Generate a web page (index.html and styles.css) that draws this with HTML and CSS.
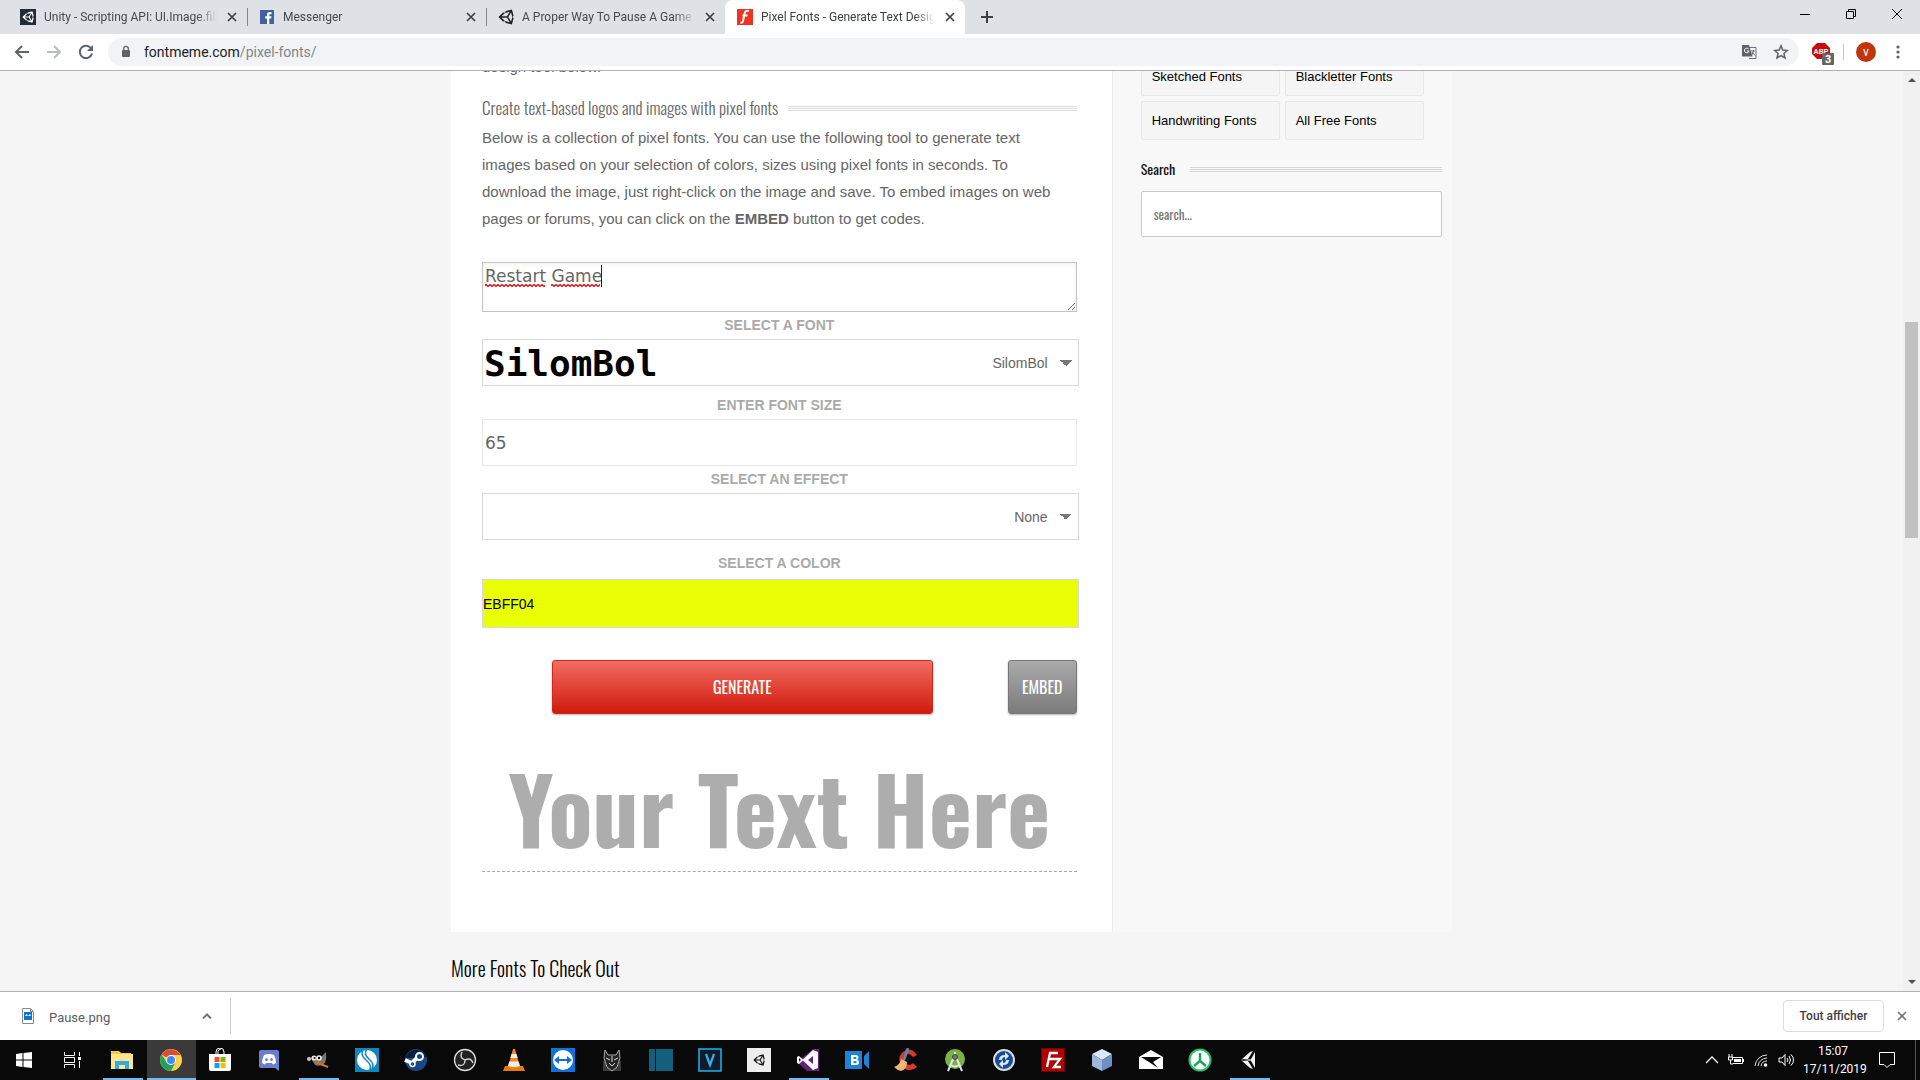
FILE: index.html
```html
<!DOCTYPE html>
<html lang="en">
<head>
<meta charset="utf-8">
<title>Pixel Fonts - Generate Text Designs</title>
<link rel="stylesheet" href="styles.css">
</head>
<body>
<svg class="defs" aria-hidden="true">
  <symbol id="x" viewBox="0 0 10 10"><path d="M1 1l8 8M9 1l-8 8" fill="none" stroke="currentColor" stroke-width="1.7"/></symbol>
  <symbol id="unity" viewBox="0 0 512 512"><path fill="currentColor" fill-rule="evenodd" d="M498.11 206.4L445.31 14.720 248.200 66.080 219 116.140l-59.200-.430L15.540 256l144.280 140.290 59.170-.420 29.240 50 197.080 51.360 52.800-191.620-30-49.630zM223.770 124.200L374.550 86.510 288 232.330H114.870zM223.770 387.830L114.870 279.710H288l86.550 145.810zM416.770 401.830L330.170 256l86.580-145.840L458.560 256z"/></symbol>
</svg>

<header class="chrome">
  <nav class="tabs" aria-label="Tabs">
    <div class="tab">
      <svg class="fav" viewBox="0 0 16 16"><rect width="16" height="16" fill="#222c37"/><use href="#unity" x="2" y="2" width="12" height="12" color="#fff"/></svg>
      <span class="tab-title">Unity - Scripting API: UI.Image.fill</span>
      <button class="close" aria-label="Close tab"><svg><use href="#x"/></svg></button>
    </div>
    <div class="tab divided">
      <svg class="fav" viewBox="0 0 16 16"><rect x="1" y="1" width="14" height="14" fill="#4460a0"/><path d="M8 15V9.500H6.200V7.300H8V5.600C8 3.800 9.200 3 10.800 3h1.700v2.200h-1.200c-.8 0-1 .4-1 1v1.100h2.200l-.3 2.200h-1.900V15z" fill="#fff"/></svg>
      <span class="tab-title">Messenger</span>
      <button class="close" aria-label="Close tab"><svg><use href="#x"/></svg></button>
    </div>
    <div class="tab divided">
      <svg class="fav"><use href="#unity" color="#222"/></svg>
      <span class="tab-title">A Proper Way To Pause A Game -</span>
      <button class="close" aria-label="Close tab"><svg><use href="#x"/></svg></button>
    </div>
    <div class="tab active">
      <svg class="fav" viewBox="0 0 16 16"><rect width="16" height="16" fill="#ee3322"/><path d="M12 2c-3-1-4 .5-4.500 3L6 12c-.3 1.500-1 2-2.500 1.500M5.500 6.500h5" fill="none" stroke="#fff" stroke-width="2"/></svg>
      <span class="tab-title">Pixel Fonts - Generate Text Desig</span>
      <button class="close" aria-label="Close tab"><svg><use href="#x"/></svg></button>
    </div>
    <button class="new-tab" aria-label="New tab"><svg viewBox="0 0 14 14"><path d="M7 1v12M1 7h12" stroke="#3c4043" stroke-width="2"/></svg></button>
    <div class="window-buttons">
      <button aria-label="Minimise"><svg viewBox="0 0 10 10"><path d="M0 5.500h10" stroke="#000"/></svg></button>
      <button aria-label="Restore"><svg viewBox="0 0 10 10"><path d="M.5 2.500h7v7h-7zM2.500 2.500v-2h7v7h-2" fill="none" stroke="#000"/></svg></button>
      <button aria-label="Close"><svg viewBox="0 0 10 10"><path d="M0 0l10 10M10 0L0 10" stroke="#000"/></svg></button>
    </div>
  </nav>
  <div class="toolbar">
    <button class="tool" aria-label="Back"><svg viewBox="0 0 16 16"><path d="M15 8H2M8 2L2 8l6 6" fill="none" stroke="#5f6368" stroke-width="2"/></svg></button>
    <button class="tool" aria-label="Forward"><svg viewBox="0 0 16 16"><path d="M1 8h13M8 2l6 6-6 6" fill="none" stroke="#babcbe" stroke-width="2"/></svg></button>
    <button class="tool" aria-label="Reload"><svg viewBox="0 0 16 16"><path d="M13.200 4.500A6.200 6.200 0 1 0 14 9.500" fill="none" stroke="#5f6368" stroke-width="2"/><path d="M15 1v6H9z" fill="#5f6368"/></svg></button>
    <div class="omnibox">
      <svg class="lock" viewBox="0 0 10 14"><rect x="1" y="5" width="8" height="7" rx="1" fill="#5f6368"/><path d="M2.700 6V3.700a2.300 2.300 0 0 1 4.600 0V6" fill="none" stroke="#5f6368" stroke-width="1.300"/></svg>
      <span class="url"><b>fontmeme.com</b>/pixel-fonts/</span>
      <svg class="mini" viewBox="0 0 16 16"><path d="M6 3.500h9v11H8" fill="none" stroke="#6b7075"/><path d="M1 1h7l3.500 11.500H1z" fill="#5f6368"/><path d="M7.500 5A2.300 2.300 0 1 0 8 7H6" fill="none" stroke="#fff"/><path d="M10 7h4M12.500 6v1.500l-2 4M11 8l3 3.500" fill="none" stroke="#6b7075"/></svg>
      <svg class="mini" viewBox="0 0 16 16"><path d="M8 1.800l1.800 4.300 4.600.4-3.500 3 1.100 4.500L8 11.600 4 14l1.100-4.500-3.500-3 4.600-.4z" fill="none" stroke="#5f6368" stroke-width="1.500"/></svg>
    </div>
    <button class="abp" aria-label="Adblock Plus">
      <svg viewBox="0 0 24 24"><path d="M6 2h8l5 5v6l-5 5H6l-5-5V7z" fill="#c70d0d"/><text x="10" y="13" text-anchor="middle" class="abp-text">ABP</text><rect x="11" y="12" width="12" height="12" rx="1" fill="#666"/><text x="17" y="22" text-anchor="middle" class="abp-count">3</text></svg>
    </button>
    <span class="tool-divider"></span>
    <button class="avatar" aria-label="Profile">v</button>
    <button class="more" aria-label="Menu"><svg viewBox="0 0 4 16"><circle cx="2" cy="3" r="1.600"/><circle cx="2" cy="8" r="1.600"/><circle cx="2" cy="13" r="1.600"/></svg></button>
  </div>
</header>

<div class="viewport">
  <div class="page">
    <div class="columns">
      <main class="main">
        <p>design tool below.</p>
        <h2 class="ruled"><span>Create text-based logos and images with pixel fonts</span></h2>
        <p>Below is a collection of pixel fonts. You can use the following tool to generate text images based on your selection of colors, sizes using pixel fonts in seconds. To download the image, just right-click on the image and save. To embed images on web pages or forums, you can click on the <strong>EMBED</strong> button to get codes.</p>
        <form class="generator">
          <div class="text-field">
            <textarea aria-label="Text" spellcheck="false">Restart Game</textarea>
            <div class="spelling" aria-hidden="true"><i class="squiggle long"></i><i class="squiggle"></i><i class="caret"></i></div>
          </div>
          <label for="font">SELECT A FONT</label>
          <div class="font-field wide">
            <select id="font"><option>SilomBol</option></select>
            <span class="preview" aria-hidden="true">SilomBol</span>
          </div>
          <label for="size" class="spaced">ENTER FONT SIZE</label>
          <input id="size" class="size" type="text" value="65">
          <label for="effect">SELECT AN EFFECT</label>
          <select id="effect" class="wide"><option>None</option></select>
          <label for="color" class="spaced-more">SELECT A COLOR</label>
          <input id="color" class="color wide" type="text" value="EBFF04">
          <div class="actions">
            <button type="button" class="generate">GENERATE</button>
            <button type="button" class="embed">EMBED</button>
          </div>
        </form>
        <div class="result">Your Text Here</div>
      </main>
      <aside class="side">
        <div class="links">
          <a href="#">Sketched Fonts</a><a href="#">Blackletter Fonts</a>
          <a href="#">Handwriting Fonts</a><a href="#">All Free Fonts</a>
        </div>
        <h3 class="ruled"><span>Search</span></h3>
        <input class="search" type="text" placeholder="search..." aria-label="Search">
      </aside>
    </div>
    <h2 class="more-fonts">More Fonts To Check Out</h2>
  </div>
  <div class="scrollbar" aria-hidden="true">
    <svg viewBox="0 0 8 4"><path d="M0 4h8L4 0z"/></svg>
    <span class="track-before"></span><span class="thumb"></span><span class="track-after"></span>
    <svg viewBox="0 0 8 4"><path d="M0 0h8L4 4z"/></svg>
  </div>
</div>

<section class="downloads" aria-label="Downloads">
  <div class="download">
    <svg class="file" viewBox="0 0 12 16"><path d="M.5.500h8l3 3v12H.5z" fill="#fff" stroke="#8a8a8a"/><path d="M8.500.500v3h3" fill="none" stroke="#8a8a8a"/><rect x="2" y="4" width="8" height="8" fill="#0b74d1"/><path d="M3 8l1.500-2L6 8l2-2 1 2z" fill="#fff"/></svg>
    <span>Pause.png</span>
    <button class="chevron" aria-label="Download options"><svg viewBox="0 0 10 6"><path d="M1 5.500l4-4 4 4" fill="none" stroke="#757575" stroke-width="2"/></svg></button>
  </div>
  <button class="show-all">Tout afficher</button>
  <button class="dismiss" aria-label="Close"><svg><use href="#x"/></svg></button>
</section>

<footer class="taskbar">
  <button class="task" aria-label="Start"><svg viewBox="0 0 24 24"><path d="M4 6l6.500-1v6.500H4zM11.500 5L20 4v7.500h-8.500zM4 12.500h6.500V19L4 18zM11.500 12.500H20V20l-8.500-1z" fill="#fff"/></svg></button>
  <button class="task" aria-label="Task view"><svg viewBox="0 0 24 24"><path d="M3.500 4v3.500h10V4M3.500 20v-3.500h10V20M3.500 9.500h10v5h-10zM18.500 4v4M18.500 13v7" fill="none" stroke="#fff"/><rect x="17" y="9" width="3" height="3" fill="#fff"/></svg></button>
  <button class="task open" aria-label="Explorer"><svg viewBox="0 0 24 24"><path d="M1 3h8l2 2h10v16H1z" fill="#f8c93c"/><path d="M1 6h22v15H1z" fill="#ffe694"/><path d="M5 21v-8h14v8h-4v-4H9v4z" fill="#35a9e0"/></svg></button>
  <button class="task open current" aria-label="Chrome"><svg viewBox="0 0 24 24"><circle cx="12" cy="12" r="11" fill="#fdd14a"/><path d="M12 12L2.500 6.500A11 11 0 0 1 21.500 7H12z" fill="#dd4b3e"/><path d="M2.500 6.500A11 11 0 0 0 12 23l4.500-8.500L7.500 14z" fill="#1da261"/><circle cx="12" cy="12" r="5" fill="#fff"/><circle cx="12" cy="12" r="4" fill="#4687f4"/></svg></button>
  <button class="task" aria-label="Store"><svg viewBox="0 0 24 24"><path d="M8 6V4a4 4 0 0 1 8 0v2M10 6V3.500A3.500 3.500 0 0 1 13 1" fill="none" stroke="#fff"/><path d="M1 6h22v15a2 2 0 0 1-2 2H3a2 2 0 0 1-2-2z" fill="#fff"/><path d="M6.500 9h5v5h-5z" fill="#f25022"/><path d="M12.500 9h5v5h-5z" fill="#7fba00"/><path d="M6.500 15h5v5h-5z" fill="#00a4ef"/><path d="M12.500 15h5v5h-5z" fill="#ffb900"/></svg></button>
  <button class="task" aria-label="Discord"><svg viewBox="0 0 24 24"><path d="M4 2h16a2 2 0 0 1 2 2v19l-4-3H4a2 2 0 0 1-2-2V4a2 2 0 0 1 2-2z" fill="#6b7fc9"/><path d="M7 7q5-2 10 0 2 4 2 8l-3 1.500-1-1.500H9l-1 1.500L5 15q0-4 2-8z" fill="#fff"/><ellipse cx="9.500" cy="11.500" rx="1.300" ry="1.600" fill="#6b7fc9"/><ellipse cx="14.500" cy="11.500" rx="1.300" ry="1.600" fill="#6b7fc9"/></svg></button>
  <button class="task open" aria-label="GIMP"><svg viewBox="0 0 24 24"><path d="M4 9q6 3 11 0l5-5q1 6-1 11-5 4-10 2z" fill="#7d7668"/><circle cx="8" cy="10" r="2.500" fill="#eee"/><circle cx="13" cy="10" r="2.800" fill="#eee"/><circle cx="8.500" cy="10" r="1"/><circle cx="13" cy="10" r="1.200"/><circle cx="3" cy="11" r="2" fill="#ccc"/><path d="M9 14l13 5" stroke="#c97828" stroke-width="2"/></svg></button>
  <button class="task" aria-label="Editor"><svg viewBox="0 0 24 24"><path d="M0 0h24v24H0z" fill="#0d87bd"/><circle cx="12" cy="12" r="10" fill="#fff"/><path d="M8 2q-3 5 3 10t4 10M12 1q-4 5 2 10t3 10" fill="none" stroke="#0d87bd" stroke-width="1.500"/></svg></button>
  <button class="task" aria-label="Steam"><svg viewBox="0 0 24 24"><circle cx="12" cy="12" r="11" fill="#174a82"/><path d="M1.500 10A11 11 0 0 1 22.500 9z" fill="#101c3b"/><path d="M1 12l7 3 5-5" fill="none" stroke="#fff" stroke-width="4"/><circle cx="15.500" cy="8.500" r="3.500" fill="#174a82" stroke="#fff" stroke-width="2"/><circle cx="8.500" cy="16" r="2.500" fill="#174a82" stroke="#fff" stroke-width="1.500"/></svg></button>
  <button class="task" aria-label="OBS"><svg viewBox="0 0 24 24"><circle cx="12" cy="12" r="10.500" fill="#222" stroke="#ddd" stroke-width="1.300"/><path d="M12 12q-6-2-3-8M12 12q6-3 8 3M12 12q0 7-7 5" fill="none" stroke="#ccc" stroke-width="1.500"/></svg></button>
  <button class="task" aria-label="VLC"><svg viewBox="0 0 24 24"><path d="M3 18h18l2 5H1z" fill="#e8790a"/><path d="M11 1h2l5 18q-6 3-12 0z" fill="#f28a1c"/><path d="M9.500 6h5l1.200 4H8.400zM7.300 13.500h9.400L18 18q-6 2-12 0z" fill="#eee"/></svg></button>
  <button class="task" aria-label="TeamViewer"><svg viewBox="0 0 24 24"><path d="M0 0h24v24H0z" fill="#0e72d8"/><circle cx="12" cy="12" r="10" fill="#fff"/><path d="M3 12l5-4v3h8V8l5 4-5 4v-3H8v3z" fill="#0e72d8"/></svg></button>
  <button class="task" aria-label="Fox"><svg viewBox="0 0 24 24"><path d="M3 13h18v10H3z" fill="#3d3d3d"/><path d="M5 2l3 5h8l3-5 1 8-3 9-5 4-5-4-3-9z" fill="#242424" stroke="#aaa"/><path d="M6 10l4 2M18 10l-4 2M9 15l3 3 3-3M12 8v6" stroke="#ddd" fill="none"/></svg></button>
  <button class="task" aria-label="Panels"><svg viewBox="0 0 24 24"><path d="M0 1h6v22H0zM7 1h17v22H7z" fill="#145f7b"/></svg></button>
  <button class="task" aria-label="Vegas"><svg viewBox="0 0 24 24"><path d="M1 1h22v22H1z" fill="#111c28" stroke="#18b4f2" stroke-width="1.500"/><path d="M8 6l4 11 4-11" fill="none" stroke="#28b5f5" stroke-width="2.200"/></svg></button>
  <button class="task" aria-label="Unity Hub"><svg viewBox="0 0 24 24"><path d="M0 0h24v24H0z" fill="#eee"/><use href="#unity" x="6" y="6" width="12" height="12" color="#111"/></svg></button>
  <button class="task open" aria-label="Visual Studio"><svg viewBox="0 0 24 24"><path d="M1 14l10 9h12V1h-6z" fill="#68217a"/><path d="M3 8l4 3.500L17 2l5 2v16l-5 2-10-9.500L3 16l-2-1V9zM17 8l-5 4 5 4zM3 10v4l2-2z" fill="#fff" fill-rule="evenodd"/></svg></button>
  <button class="task" aria-label="Bandicam"><svg viewBox="0 0 24 24"><path d="M0 3h17v18H0zM19 8l5-5v18l-5-5z" fill="#1e83d8"/><path d="M6 7h4.500q3 0 3 2.500 0 1.700-1.500 2.300 2 .5 2 2.700 0 2.500-3.500 2.500H6zm2.500 2v2h2q1 0 1-1t-1-1zm0 4v2.200h2q1.200 0 1.200-1.100T10.500 13z" fill="#fff" fill-rule="evenodd"/></svg></button>
  <button class="task" aria-label="CCleaner"><svg viewBox="0 0 24 24"><path d="M23 7Q16-2 9 4T8 18q7 8 15 1l-4-4q-4 4-7 0t0-8q3-3 7 2z" fill="#d63c2a"/><path d="M14 0l-4 12" stroke="#4791ce" stroke-width="2.500"/><path d="M7 11l6 3q0 8-6 9-4-1-7-4 6-2 7-8z" fill="#f1b476"/></svg></button>
  <button class="task" aria-label="Android Studio"><svg viewBox="0 0 24 24"><circle cx="12" cy="11" r="10" fill="#7cb342"/><path d="M12 4v4M10.500 10L5 23M13.500 10L19 23M8 17q4 3 8 0" fill="none" stroke="#e4e4e4" stroke-width="2"/><circle cx="12" cy="9" r="2.500" fill="#777" stroke="#444"/></svg></button>
  <button class="task" aria-label="Sync"><svg viewBox="0 0 24 24"><circle cx="12" cy="12" r="10" fill="#174a9a" stroke="#ddd" stroke-width="2"/><path d="M7 12q0-5 6-5V4l4 4-4 4V9q-3 0-3 3zM17 12q0 5-6 5v3l-4-4 4-4v3q3 0 3-3z" fill="#dceaff"/></svg></button>
  <button class="task" aria-label="FileZilla"><svg viewBox="0 0 24 24"><path d="M.5.500h23v23H.5z" fill="#b20303" stroke="#7a0808" stroke-dasharray="1 1"/><path d="M6 19L9 5h8M7 11h7M13 11h6l-6 8h7" fill="none" stroke="#fff" stroke-width="2.300"/></svg></button>
  <button class="task" aria-label="VirtualBox"><svg viewBox="0 0 24 24"><path d="M12 1l10 5-10 6L2 6z" fill="#d9e8f4"/><path d="M2 6l10 6v11L2 18z" fill="#9bb9de"/><path d="M22 6l-10 6v11l10-5z" fill="#6d8fc2"/></svg></button>
  <button class="task" aria-label="Mail"><svg viewBox="0 0 24 24"><path d="M0 9l12-7 12 7v12H0z" fill="#fff"/><path d="M2 9h20l-8 5 5 6-9-6z" fill="#090909"/></svg></button>
  <button class="task" aria-label="Git client"><svg viewBox="0 0 24 24"><circle cx="12" cy="12" r="10.500" fill="#fff" stroke="#27c26a" stroke-width="2"/><path d="M12 5v8l-6 5M12 13l6 5" fill="none" stroke="#15a957" stroke-width="2.500"/></svg></button>
  <button class="task open" aria-label="Unity"><svg viewBox="0 0 24 24"><path d="M4 12l9-8 3-1-5 8H6zM4 12l9 8 3 1-5-8H6zM18 4v16l-4.500-8z" fill="#f2f2f2"/><path d="M4 12l8-1h2v2h-2z" fill="#999"/></svg></button>
  <div class="tray">
    <svg viewBox="0 0 14 14"><path d="M1 10l6-6 6 6" fill="none" stroke="#fff" stroke-width="1.300"/></svg>
    <svg class="tray-icon" viewBox="0 0 16 16"><path d="M5 5.500h9.500v6H5M15.500 7v3M1 2v3M4 2v3M.5 5h4v3h-4zM2.500 8v4H5" fill="none" stroke="#fff"/><path d="M6 7h7v3H6z" fill="#fff"/></svg>
    <svg class="tray-icon" viewBox="0 0 16 16"><path d="M2 14A12 12 0 0 1 14 3M5 14a9 9 0 0 1 9-8M8 14a6 6 0 0 1 6-5" fill="none" stroke="#ddd"/><circle cx="12.500" cy="13" r="1.800" fill="#fff"/></svg>
    <svg class="tray-icon" viewBox="0 0 16 16"><path d="M1 6h3l3-3.500v11L4 10H1zM9 6q2 2 0 4M11 4q3 4 0 8M13 2.500q5 5.500 0 11" fill="none" stroke="#fff"/></svg>
    <div class="clock"><time>15:07</time><span>17/11/2019</span></div>
    <button class="notify" aria-label="Notifications"><svg viewBox="0 0 16 16"><path d="M.5.500h15v12H11l-3 3-3-3H.5z" fill="none" stroke="#fff"/></svg></button>
    <span class="peek"></span>
  </div>
</footer>
</body>
</html>
```

FILE: styles.css
```css
* { box-sizing: border-box; }
body {
  margin: 0;
  height: 100vh;
  display: flex;
  flex-direction: column;
  overflow: hidden;
  font-family: "Liberation Sans", Arial, sans-serif;
  background: #f5f5f5;
}
button { border: 0; padding: 0; background: none; font: inherit; color: inherit; }
svg { display: block; flex: none; }
.defs { position: absolute; width: 0; height: 0; }

/* browser frame */
.chrome, .downloads { font-family: "Segoe UI", Roboto, sans-serif; font-size: 12px; color: #3c4043; }
.chrome { border-bottom: 1px solid #b2b0b2; background: #fff; }
.tabs { display: flex; align-items: stretch; height: 34px; padding-left: 8px; background: #dee1e6; }
.tab { position: relative; display: flex; align-items: center; gap: 8px; width: 239px; padding: 0 8px 0 12px; }
.divided::before { content: ""; position: absolute; left: 0; top: 8px; height: 18px; border-left: 1px solid #85878a; }
.active { width: 240px; background: #fff; border-radius: 8px 8px 0 0; }
.fav { width: 16px; height: 16px; }
.tab-title {
  flex: 1; min-width: 0; overflow: hidden; white-space: nowrap; line-height: 20px; color: #45494d;
  mask-image: linear-gradient(to right, #000 88%, transparent);
}
.active .tab-title { color: #3c4043; }
.close { width: 14px; height: 14px; padding: 2px; }
.close svg { width: 10px; height: 10px; }
.new-tab { width: 28px; margin-left: 8px; padding: 0 7px; }
.new-tab svg { width: 14px; height: 14px; }
.window-buttons { display: flex; margin-left: auto; }
.window-buttons button { width: 46px; padding: 0 18px 6px; }
.window-buttons svg { width: 10px; height: 10px; }
.toolbar { display: flex; align-items: center; height: 36px; padding: 0 20px 0 14px; }
.tool { width: 16px; height: 16px; margin-right: 16px; }
.tool svg { width: 16px; height: 16px; }
.omnibox { flex: 1; display: flex; align-items: center; height: 28px; padding: 0 10px 0 13px; border-radius: 14px; background: #f1f3f4; }
.tool + .omnibox { margin-left: -2px; }
.lock { width: 10px; height: 14px; margin-right: 13px; }
.url { flex: 1; font-size: 14px; line-height: 20px; color: #80868b; }
.url b { font-weight: 400; color: #202124; }
.mini { width: 16px; height: 16px; margin-left: 16px; }
.abp { width: 24px; height: 24px; margin: 2px 8px 0 12px; }
.abp-text { font: bold 7px "Liberation Sans", sans-serif; fill: #fff; }
.abp-count { font: bold 11px "Liberation Sans", sans-serif; fill: #fff; }
.tool-divider { height: 16px; border-left: 1px solid #c4c6c8; }
.avatar { width: 20px; height: 20px; margin: 0 20px 0 12px; border-radius: 50%; background: #bf360c; color: #fff; line-height: 18px; }
.more { width: 4px; }
.more svg { width: 4px; height: 16px; fill: #5f6368; }

/* web page */
.viewport { flex: 1; min-height: 0; display: flex; overflow: hidden; }
.page { flex: 1; margin-top: -18px; }
.columns, .more-fonts { max-width: 1001px; margin: 0 auto; }
.columns { display: grid; grid-template-columns: 66fr 34fr; }
.main { padding: 0 35px 60px 31px; background: #fff; color: #666; }
.main p { margin: 0; padding-right: 10px; font-size: 15px; line-height: 27px; }
.ruled { display: flex; align-items: center; font-family: Oswald, "Liberation Sans Narrow", sans-serif; font-weight: 400; }
.ruled::after {
  content: ""; flex: 1; height: 5px;
  background: repeating-linear-gradient(#dcdcdc 0 1px, transparent 1px 2px);
}
.main .ruled { gap: 10px; margin: 14px 0 2px; font-size: 17px; font-weight: 300; line-height: 28px; }
.generator { display: grid; margin-top: 30px; }
.wide { margin-right: -2px; }
.generator label { text-align: center; font-size: 14px; font-weight: 700; line-height: 27px; color: #aaa; }
.generator .spaced { padding-top: 6px; }
.generator .spaced-more { padding: 10px 0 2px; }
.text-field, .font-field { position: relative; display: grid; }
textarea {
  display: block; width: 100%; height: 50px; padding: 2px; border: 1px solid #c4c4c4; border-radius: 0;
  background: #fff; box-shadow: inset 0 1px 6px rgba(0, 0, 0, .06); color: #666; outline: 0;
  font: 17px/22px Verdana, "DejaVu Sans", sans-serif;
}
.spelling { position: absolute; left: 3px; top: 3px; height: 22px; display: flex; align-items: flex-end; pointer-events: none; }
.squiggle {
  width: 49px; height: 3px; margin-right: 1px;
  background:
    linear-gradient(45deg, transparent 40%, #f22 40% 60%, transparent 60%) 0 0 / 4px 3px,
    linear-gradient(-45deg, transparent 40%, #f22 40% 60%, transparent 60%) 2px 0 / 4px 3px;
}
.squiggle.long { width: 60px; margin-right: 6px; }
.caret { height: 22px; border-left: 1px solid #222; }
select, .size, .color { width: 100%; border: 1px solid #dadada; border-radius: 0; background: #fff; color: #666; }
select {
  appearance: none; height: 47px; padding: 0 30px 0 8px; text-align-last: right;
  font: 14px "Liberation Sans", Arial, sans-serif;
  background: linear-gradient(to bottom right, #777 50%, transparent 50%) right 6px center / 6px 6px no-repeat,
    linear-gradient(to bottom left, #777 50%, transparent 50%) right 12px center / 6px 6px no-repeat, #fff;
}
.preview {
  position: absolute; left: 2px; top: 0; line-height: 50px; pointer-events: none;
  font-family: "DejaVu Sans Mono", monospace; font-size: 36px; font-weight: 700; color: #000;
}
.size { height: 47px; padding: 2px; border-color: #e8e8e8; font: 17px Verdana, "DejaVu Sans", sans-serif; }
.color { height: 49px; padding: 0; background: #ebff04; color: #000; font: 14px "Liberation Sans", Arial, sans-serif; }
.wide.color, select.wide { width: auto; }
.actions { display: grid; grid-template-columns: 381fr 69px; column-gap: 75px; margin-top: 32px; padding-left: 70px; }
.actions button {
  height: 54px; border-radius: 3px; color: #fff; font: 16px Oswald, "Liberation Sans Narrow", sans-serif;
  box-shadow: 0 1px 2px rgba(0, 0, 0, .3);
}
.actions .generate { border: 1px solid #d02718; background: linear-gradient(#f36c62, #d01a0d); }
.actions .embed { border: 1px solid #777; background: linear-gradient(#aaa, #7b7b7b); }
.result {
  margin-top: 33px; padding-bottom: 4px; border-bottom: 1px dashed #aaa; text-align: center; white-space: nowrap;
  font: bold 92px/120px Oswald, "Liberation Sans Narrow", sans-serif; color: #adadad;
}
.side { padding: 4px 10px 0 28px; border-left: 1px solid #ebebeb; background: #f8f8f8; }
.links { display: grid; grid-template-columns: 139px 139px; gap: 5px; }
.links a {
  height: 39px; padding-left: 10px; border: 1px solid #e8e8e8; border-radius: 2px; background: #f5f5f5;
  font-size: 13px; line-height: 37px; color: #000; text-decoration: none;
}
.side .ruled { gap: 15px; margin: 18px 0 11px; font-size: 14px; line-height: 22px; color: #111; }
.side .ruled::after { background: repeating-linear-gradient(#d8d8d8 0 1px, transparent 1px 2px); }
.search {
  display: block; width: 100%; height: 46px; padding: 0 12px; border: 1px solid #c8c8c8; border-radius: 2px; background: #fff;
  font: 13px Oswald, "Liberation Sans Narrow", sans-serif;
}
.search::placeholder { color: #777; }
.more-fonts { padding-top: 20px; font: 300 20px/32px Oswald, "Liberation Sans Narrow", sans-serif; color: #000; }
.scrollbar { display: flex; flex-direction: column; align-items: center; width: 17px; padding: 7px 0; background: #f1f1f1; }
.scrollbar svg { width: 8px; height: 4px; fill: #505050; }
.track-before { flex: 240; }
.thumb { flex: 216; width: 13px; background: #c1c1c1; }
.track-after { flex: 442; }

/* downloads shelf */
.downloads { display: flex; align-items: center; height: 49px; padding-right: 13px; border-top: 1px solid #b2b0b2; background: #fff; }
.download { display: flex; align-items: center; width: 231px; height: 36px; padding: 0 18px 0 22px; border-right: 1px solid #ccc; font-size: 13px; color: #5a5d61; }
.file { width: 12px; height: 16px; margin-right: 15px; }
.download span { padding-top: 3px; }
.chevron { margin-left: auto; }
.chevron svg { width: 10px; height: 6px; }
.show-all { width: 101px; height: 32px; margin-left: auto; border: 1px solid #dadce0; border-radius: 4px; font-weight: 500; }
.dismiss { margin-left: 13px; color: #757575; }
.dismiss svg { width: 10px; height: 10px; }

/* taskbar */
.taskbar { display: flex; height: 40px; background: #090909; color: #fff; }
.task { position: relative; width: 49px; height: 40px; padding: 0 12px; }
.task svg { width: 24px; height: 24px; }
.open::after { content: ""; position: absolute; left: 5px; right: 4px; bottom: 0; height: 2px; background: #76b9ed; }
.current { background: #3a3a3a; }
.current::after { left: 0; right: 0; }
.tray { display: flex; align-items: center; gap: 9px; margin-left: auto; }
.tray svg { width: 14px; height: 14px; }
.tray .tray-icon, .notify svg { width: 16px; height: 16px; }
.clock { display: flex; flex-direction: column; width: 60px; text-align: center; font: 12px/18px "Segoe UI", Roboto, sans-serif; }
.notify { margin-left: 7px; }
.peek { height: 40px; margin: 0 4px 0 11px; border-left: 1px solid #555; }
```
